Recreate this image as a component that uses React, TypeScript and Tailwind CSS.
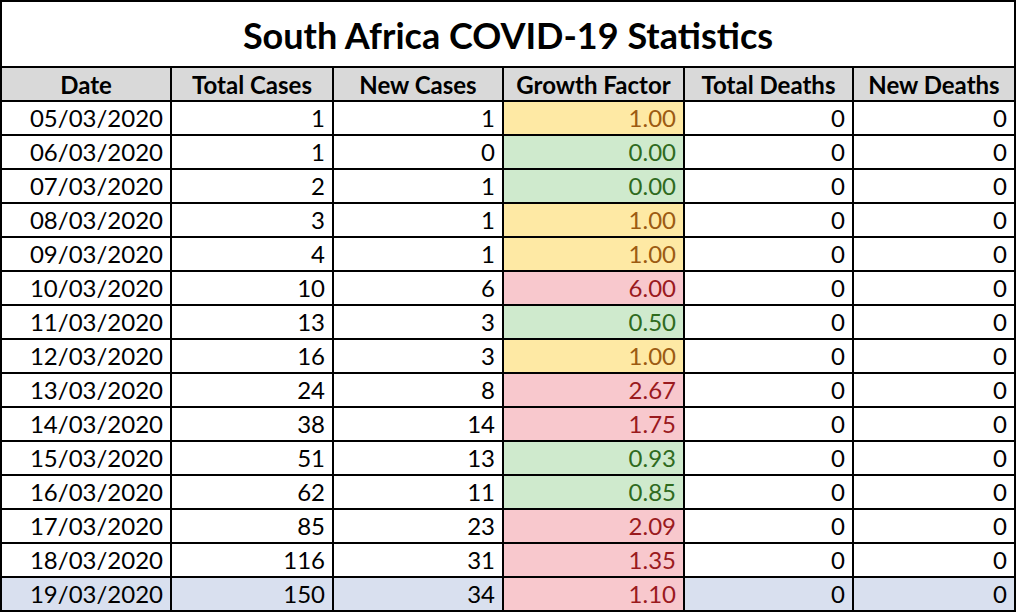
import React from "react"

type Tone = "yellow" | "green" | "red"

const rows: [string, number, number, string, Tone][] = [
  ["05/03/2020", 1, 1, "1.00", "yellow"],
  ["06/03/2020", 1, 0, "0.00", "green"],
  ["07/03/2020", 2, 1, "0.00", "green"],
  ["08/03/2020", 3, 1, "1.00", "yellow"],
  ["09/03/2020", 4, 1, "1.00", "yellow"],
  ["10/03/2020", 10, 6, "6.00", "red"],
  ["11/03/2020", 13, 3, "0.50", "green"],
  ["12/03/2020", 16, 3, "1.00", "yellow"],
  ["13/03/2020", 24, 8, "2.67", "red"],
  ["14/03/2020", 38, 14, "1.75", "red"],
  ["15/03/2020", 51, 13, "0.93", "green"],
  ["16/03/2020", 62, 11, "0.85", "green"],
  ["17/03/2020", 85, 23, "2.09", "red"],
  ["18/03/2020", 116, 31, "1.35", "red"],
  ["19/03/2020", 150, 34, "1.10", "red"],
]

const toneClass: Record<Tone, string> = {
  yellow: "bg-[#fee9a4] text-[#9c5b12]",
  green: "bg-[#cfeacd] text-[#2f6b1e]",
  red: "bg-[#f8c8cd] text-[#9a1a1e]",
}

const headers = ["Date", "Total Cases", "New Cases", "Growth Factor", "Total Deaths", "New Deaths"]

export default function App() {
  return (
    <div className="w-[1016px] h-[612px] bg-white overflow-hidden" style={{ fontFamily: "Lato, 'Open Sans', sans-serif" }}>
      <div className="grid grid-cols-[168px_160px_168px_179px_167px_160px] gap-[2px] bg-black p-[2px]">
        {/* Title */}
        <div className="col-span-6 h-[64px] bg-white flex items-center justify-center pt-[2px] text-[36px] font-bold text-black">
          South Africa COVID-19 Statistics
        </div>

        {/* Header */}
        {headers.map((h) => (
          <div key={h} className="h-[32px] bg-[#d9d9d9] flex items-center justify-center pt-[1px] text-[24px] font-bold text-black">
            {h}
          </div>
        ))}

        {/* Data rows */}
        {rows.map(([date, total, added, growth, tone], i) => {
          const last = i === rows.length - 1
          const base = last ? "bg-[#d9e0ef] text-black" : "bg-white text-black"
          const cell = "h-[32px] flex items-center justify-end pr-[7px] text-[24px]"
          return (
            <React.Fragment key={date}>
              <div className={`${cell} ${base}`}>{date}</div>
              <div className={`${cell} ${base}`}>{total}</div>
              <div className={`${cell} ${base}`}>{added}</div>
              <div className={`${cell} ${toneClass[tone]}`}>{growth}</div>
              <div className={`${cell} ${base}`}>0</div>
              <div className={`${cell} ${base}`}>0</div>
            </React.Fragment>
          )
        })}
      </div>
    </div>
  )
}
